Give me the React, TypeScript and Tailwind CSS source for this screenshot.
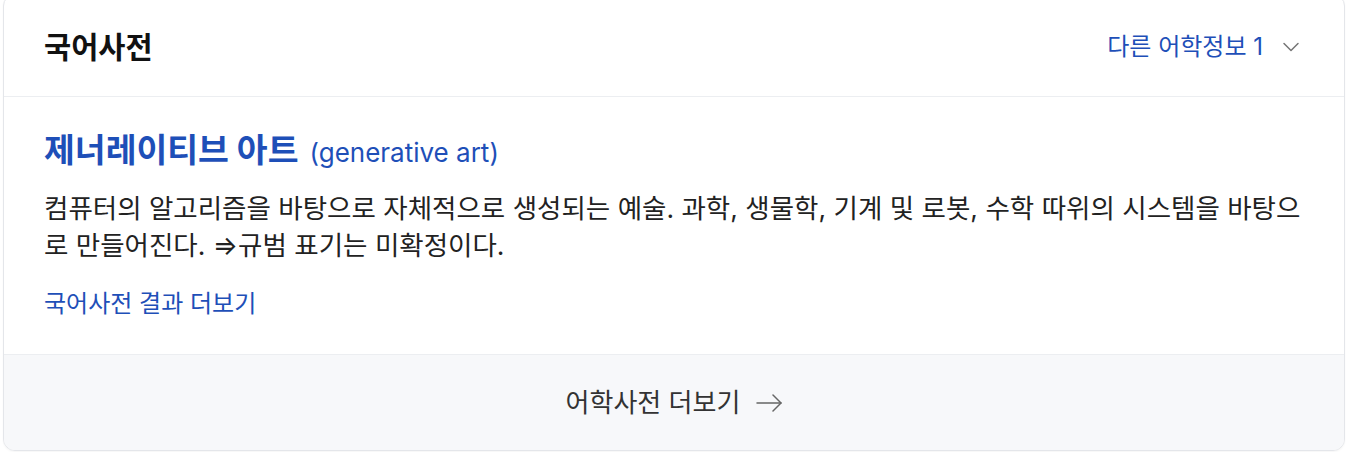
import { ChevronDown } from "lucide-react";

export default function App() {
  return (
    <div className="w-[1348px] h-[452px] overflow-hidden bg-white font-['Inter','Noto_Sans_CJK_KR',sans-serif]">
      <div className="mx-[3px] -mt-[6px] h-[457px] flex flex-col rounded-[12px] border border-[#e4e6ea] bg-white overflow-hidden shadow-[0_1px_2px_rgba(0,0,0,0.04)]">
        {/* header */}
        <div className="h-[102px] shrink-0 flex items-center justify-between pl-[40px] pr-[39px] pt-[3px] border-b border-[#eceef1]">
          <h2 className="text-[29.5px] font-bold text-[#111]">국어사전</h2>
          <button className="flex items-center gap-[14px] text-[24px] text-[#1e4fb8]">
            <span>다른 어학정보 1</span>
            <ChevronDown className="w-[28px] h-[28px] text-[#777]" strokeWidth={1.3} />
          </button>
        </div>

        {/* body */}
        <div className="flex-1 px-[40px] pt-[33px]">
          <div className="flex items-baseline gap-[11px] leading-[40px]">
            <span className="text-[33.5px] font-bold text-[#1e4fb8]">제너레이티브 아트</span>
            <span className="text-[26px] text-[#1e4fb8]">(generative art)</span>
          </div>
          <p className="mt-[17px] text-[26.5px] leading-[37px] text-[#222]">
            컴퓨터의 알고리즘을 바탕으로 자체적으로 생성되는 예술. 과학, 생물학, 기계 및 로봇, 수학 따위의 시스템을 바탕으
            <br />
            로 만들어진다. ⇒규범 표기는 미확정이다.
          </p>
          <a className="mt-[25px] block text-[24px] leading-[30px] text-[#1e4fb8]">국어사전 결과 더보기</a>
        </div>

        {/* footer */}
        <div className="h-[96px] shrink-0 border-t border-[#eceef1] bg-[#f7f8fa] flex items-center justify-center gap-[16px]">
          <span className="text-[26px] text-[#333]">어학사전 더보기</span>
          <svg width="26" height="18" viewBox="0 0 26 18" fill="none" stroke="#666" strokeWidth="1.5" strokeLinecap="round" strokeLinejoin="round">
            <path d="M1 9h24" />
            <path d="M17 1l8 8-8 8" />
          </svg>
        </div>
      </div>
    </div>
  );
}
